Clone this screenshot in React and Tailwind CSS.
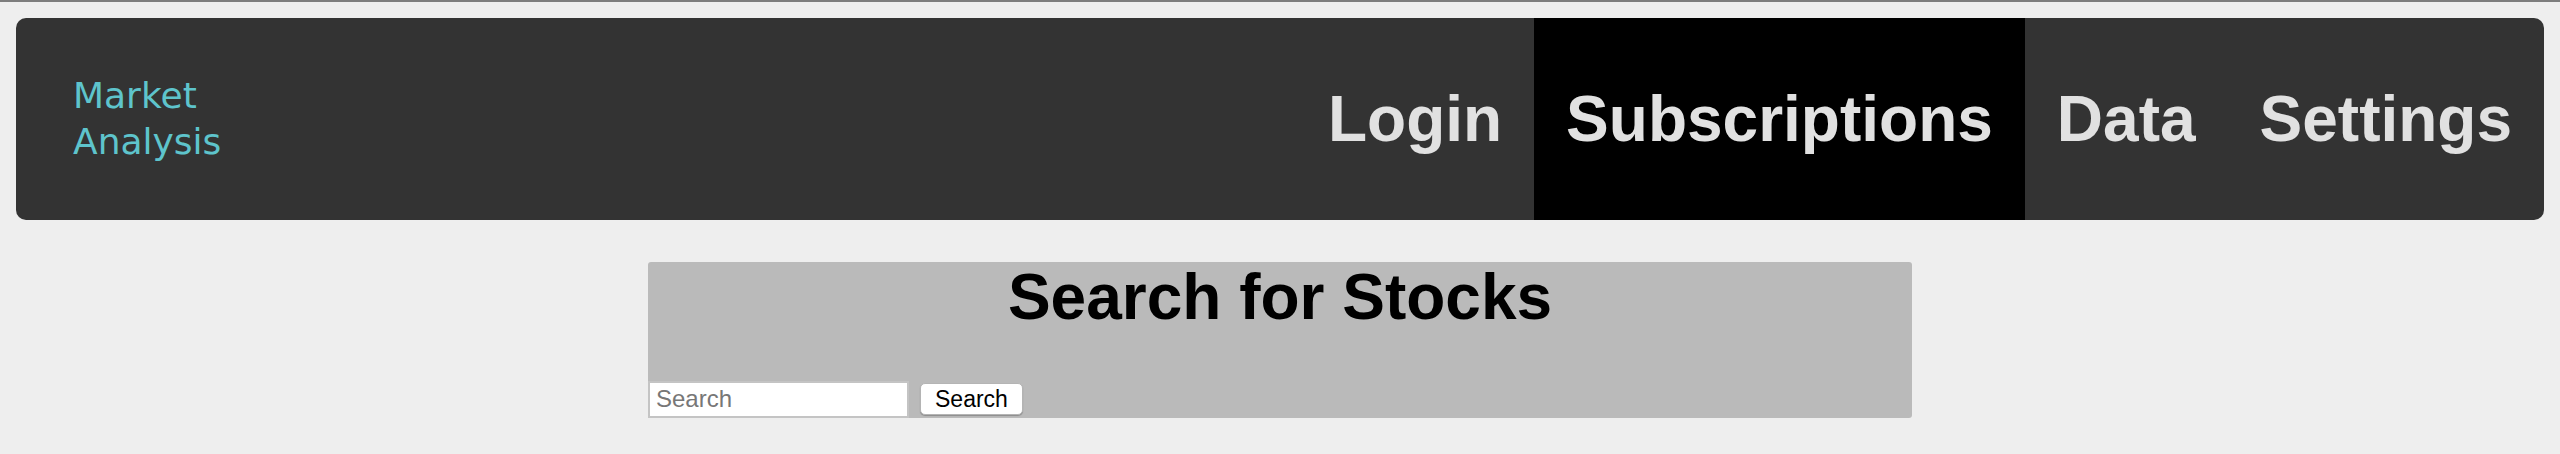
import React from "react";

const navItems = [
  { label: "Login", active: false },
  { label: "Subscriptions", active: true },
  { label: "Data", active: false },
  { label: "Settings", active: false },
];

export default function App() {
  return (
    <div className="min-h-screen w-full bg-[#eeeeee]" style={{ minHeight: "454px" }}>
      <div className="h-[2px] w-full bg-[#7d7d7d]" />
      <div className="px-[16px] pt-[16px]">
        <nav className="flex h-[202px] items-stretch justify-between overflow-hidden rounded-[10px] bg-[#333333]">
          <div
            className="flex flex-col justify-center pl-[57px] pt-[0px] text-[36px] leading-[46px] text-[#5ec4cc]"
            style={{ fontFamily: '"DejaVu Sans", sans-serif' }}
          >
            <span>Market</span>
            <span>Analysis</span>
          </div>
          <ul className="m-0 flex list-none items-stretch p-0">
            {navItems.map((item) => (
              <li
                key={item.label}
                className={
                  "flex items-center px-[32px] text-[64px] font-bold text-[#e1e1e1] " +
                  (item.active ? "bg-black" : "")
                }
                style={{ fontFamily: '"Liberation Sans", Arial, sans-serif' }}
              >
                {item.label}
              </li>
            ))}
          </ul>
        </nav>
        <div className="mx-auto mt-[42px] flex w-1/2 flex-col rounded-[3px] bg-[#bababa]">
          <h1
            className="m-0 h-[74px] text-center text-[64px] font-bold leading-[71px] text-black"
            style={{ fontFamily: '"Liberation Sans", Arial, sans-serif' }}
          >
            Search for Stocks
          </h1>
          <div className="mt-[44px] flex h-[38px] items-center gap-[11px]">
            <input
              type="text"
              placeholder="Search"
              className="h-[37px] w-[261px] border-2 border-[#c4c4c4] bg-white px-[6px] text-[24px] text-black outline-none placeholder:text-[#777777]"
              style={{ fontFamily: '"Liberation Sans", Arial, sans-serif' }}
            />
            <button
              type="button"
              className="h-[32px] rounded-[5px] border border-[#b4b4b4] bg-white px-[14px] text-[23px] leading-[30px] text-black shadow-[0_1px_1px_rgba(0,0,0,0.25)]"
              style={{ fontFamily: '"Liberation Sans", Arial, sans-serif' }}
            >
              Search
            </button>
          </div>
        </div>
      </div>
    </div>
  );
}
